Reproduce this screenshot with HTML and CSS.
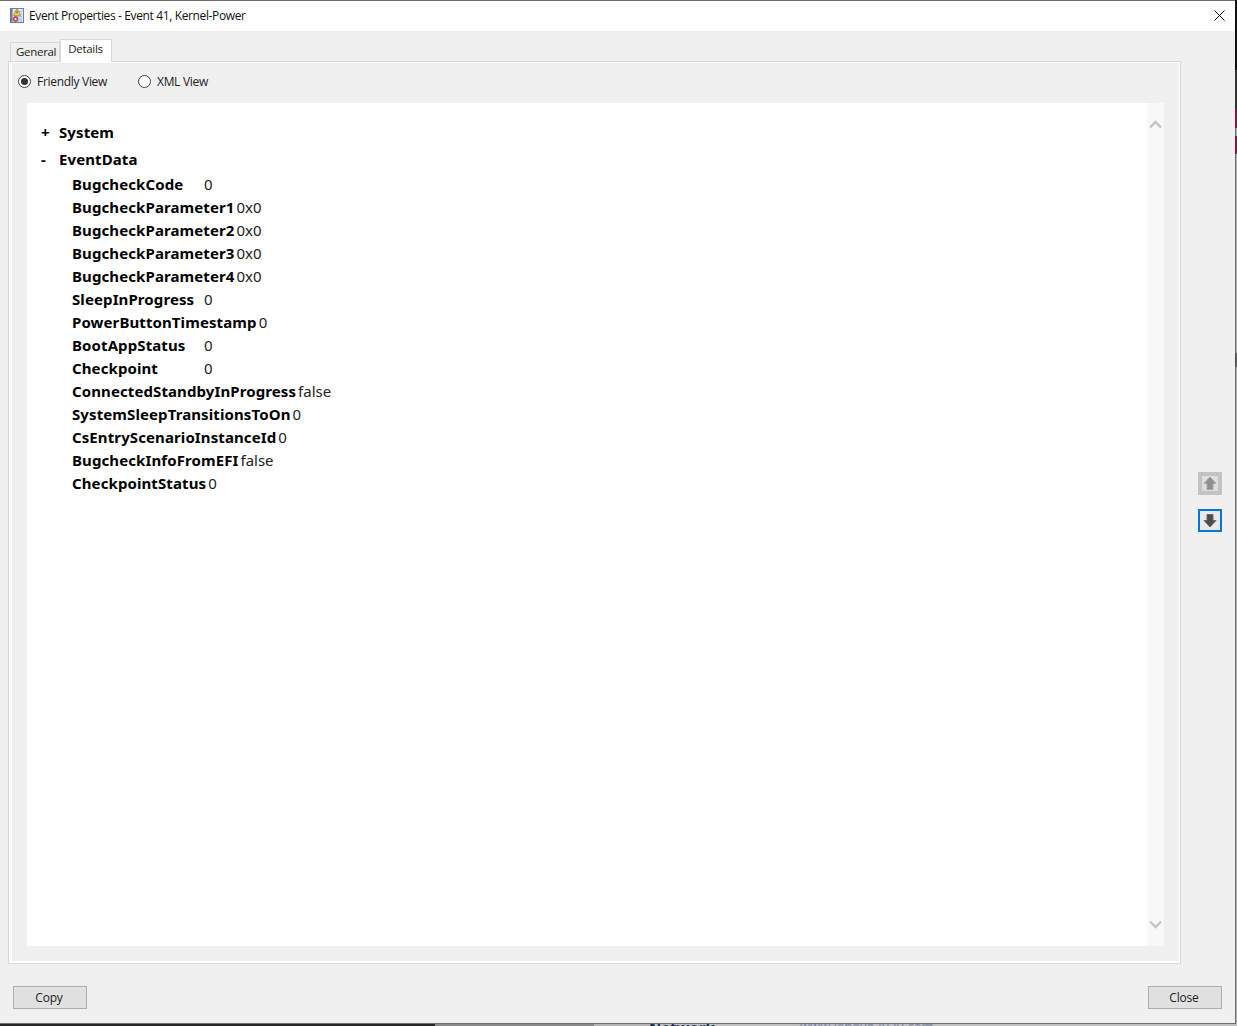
FILE: index.html
```html
<!DOCTYPE html>
<html lang="en">
<head>
<meta charset="utf-8">
<title>Event Properties</title>
<link rel="stylesheet" href="styles.css">
</head>
<body>
<div class="stage">
  <div class="window">
    <header class="titlebar">
      <svg class="appicon" width="15" height="15" viewBox="0 0 15 15">
        <rect x="1.500" y=".5" width="13" height="14" fill="#dde5f3" stroke="#6d7fa6"/>
        <rect x="1" y="0" width="2.500" height="15" fill="#6a7ba3"/>
        <path d="M5 3.500h8M5 6h8M5 8.500h8M5 11h8M5 13h8" stroke="#a9b8d4"/>
        <path d="M8 .5 L11.500 7.500 H4.500 Z" fill="#f0cf5a" stroke="#a5842a" stroke-width=".7"/>
        <path d="M8 3v2.500" stroke="#5a4710"/>
        <circle cx="6.500" cy="11" r="2.500" fill="#d8524f" stroke="#9a3a3a" stroke-width=".6"/>
        <circle cx="6.500" cy="11" r="1" fill="#fff"/>
      </svg>
      <span class="title">Event Properties - Event 41, Kernel-Power</span>
      <svg class="closex" width="11" height="11" viewBox="0 0 11 11"><path d="M.5.5l10 10M10.500.5l-10 10" stroke="#000" fill="none"/></svg>
    </header>
    <main class="content">
      <div class="left">
        <nav class="tabs">
          <span class="tab">General</span>
          <span class="tab active">Details</span>
        </nav>
        <section class="panel">
          <div class="views">
            <label class="view view-first"><span class="radio on"></span>Friendly View</label>
            <label class="view"><span class="radio"></span>XML View</label>
          </div>
          <div class="viewer">
            <div class="tree">
              <div class="node node-sys"><span class="sign">+</span><b>System</b></div>
              <div class="node node-data"><span class="sign">-</span><b>EventData</b></div>
              <div class="data">
                <div class="row"><b>BugcheckCode</b><span>0</span></div>
                <div class="row"><b>BugcheckParameter1</b><span>0x0</span></div>
                <div class="row"><b>BugcheckParameter2</b><span>0x0</span></div>
                <div class="row"><b>BugcheckParameter3</b><span>0x0</span></div>
                <div class="row"><b>BugcheckParameter4</b><span>0x0</span></div>
                <div class="row"><b>SleepInProgress</b><span>0</span></div>
                <div class="row"><b>PowerButtonTimestamp</b><span>0</span></div>
                <div class="row"><b>BootAppStatus</b><span>0</span></div>
                <div class="row"><b>Checkpoint</b><span>0</span></div>
                <div class="row"><b>ConnectedStandbyInProgress</b><span>false</span></div>
                <div class="row"><b>SystemSleepTransitionsToOn</b><span>0</span></div>
                <div class="row"><b>CsEntryScenarioInstanceId</b><span>0</span></div>
                <div class="row"><b>BugcheckInfoFromEFI</b><span>false</span></div>
                <div class="row"><b>CheckpointStatus</b><span>0</span></div>
              </div>
            </div>
            <div class="scrollbar">
              <svg width="13" height="9" viewBox="0 0 13 9"><path d="M1 7.500l5.500-5.500 5.500 5.500" stroke="#c4c4c4" stroke-width="2.400" fill="none"/></svg>
              <svg width="13" height="9" viewBox="0 0 13 9"><path d="M1 1.500l5.500 5.500 5.500-5.500" stroke="#c4c4c4" stroke-width="2.400" fill="none"/></svg>
            </div>
          </div>
        </section>
      </div>
      <aside class="arrows">
        <span class="arrowbtn disabled"><svg width="14" height="15" viewBox="0 0 14 15"><path d="M7 1l6 6.500H10V13.500H4V7.500H1z" fill="#8e8e8e" stroke="#a8a8a8"/></svg></span>
        <span class="arrowbtn focused"><svg width="14" height="15" viewBox="0 0 14 15"><path d="M7 14l6-6.500H10V1.500H4V7.500H1z" fill="#4c4c4c" stroke="#6a6a6a"/></svg></span>
      </aside>
    </main>
    <footer class="footer">
      <button class="btn">Copy</button>
      <button class="btn">Close</button>
    </footer>
  </div>
  <div class="edge-right"></div>
</div>
<div class="edge-bottom">
  <span class="seg seg-dark"></span>
  <span class="seg seg-mid"></span>
  <span class="seg seg-soft"></span>
  <span class="seg seg-head">Network</span>
  <span class="seg seg-link">www.lenovo2020.com</span>
</div>
</body>
</html>
```

FILE: styles.css
```css
html, body { margin: 0; padding: 0; height: 100%; background: #f0f0f0; overflow: hidden; }
body { font-family: "Open Sans", "Noto Sans", sans-serif; color: #000; }
.stage { display: flex; height: 1024px; }
.window { width: 1235px; height: 1024px; flex: none; display: flex; flex-direction: column; background: #f0f0f0; border-top: 1px solid #6e6e6e; border-bottom: 1px solid #6e6e6e; box-sizing: border-box; }
.titlebar { height: 30px; flex: none; background: #fff; display: flex; align-items: center; padding: 0 0 2px 9px; box-sizing: border-box; font-size: 12px; }
.appicon { margin-right: 5px; }
.title { color: #111; letter-spacing: -.37px; }
.closex { margin-left: auto; margin-right: 10px; }
.content { display: flex; padding-left: 8px; flex: none; height: 933px; }
.left { width: 1173px; display: flex; flex-direction: column; }
.tabs { height: 30px; flex: none; display: flex; align-items: flex-end; padding-left: 2px; font-size: 11.5px; letter-spacing: -.3px; }
.tab { height: 19px; line-height: 17px; padding: 0 3px 0 5px; border: 1px solid #d9d9d9; border-bottom: 0; box-sizing: border-box; background: #f0f0f0; color: #222; }
.tab.active { height: 23px; line-height: 18px; background: #fff; padding: 0 8px 0 7px; position: relative; top: 1px; z-index: 1; color: #222; }
.panel { height: 903px; box-sizing: border-box; border: 1px solid #d9d9d9; box-shadow: inset 3px 1px 0 #fff, inset -1px -2px 0 #fff; display: flex; flex-direction: column; padding: 0 16px 17px 18px; }
.views { height: 41px; flex: none; padding-bottom: 3px; box-sizing: border-box; display: flex; align-items: center; font-size: 12px; letter-spacing: -.3px; color: #222; margin-left: -9px; }
.view { display: flex; align-items: center; gap: 6px; }
.view-first { width: 120px; }
.radio { width: 13px; height: 13px; border: 1px solid #444; border-radius: 50%; background: #fff; box-sizing: border-box; display: block; position: relative; }
.radio.on::after { content: ""; position: absolute; left: 2px; top: 2px; width: 7px; height: 7px; border-radius: 50%; background: #333; }
.viewer { flex: 1; display: flex; background: #fff; min-height: 0; }
.tree { flex: 1; padding: 19px 0 0 14px; font-family: "Noto Sans", "Open Sans", sans-serif; font-size: 15px; }
.node { display: flex; height: 27px; line-height: 21px; }
.node-data { height: 24px; }
.node b, .row b { font-weight: 700; letter-spacing: .1px; white-space: nowrap; }
.sign { width: 18px; font-weight: 700; }
.data { margin-left: 31px; }
.row { display: flex; height: 23px; line-height: 23px; color: #222; }
.row b { min-width: 130px; margin-right: 2px; color: #000; }
.scrollbar { width: 17px; flex: none; background: #f8f8f8; display: flex; flex-direction: column; justify-content: space-between; align-items: center; padding: 17px 0; box-sizing: border-box; }
.arrows { width: 54px; flex: none; display: flex; flex-direction: column; align-items: center; gap: 14px; padding: 441px 0 0 4px; box-sizing: border-box; }
.arrowbtn { width: 24px; height: 23px; box-sizing: border-box; display: flex; align-items: center; justify-content: center; }
.arrowbtn.disabled { background: #dedede; border: 4px solid #c3c3c3; }
.arrowbtn.focused { background: #e9e9e9; border: 2px solid #0078d7; }
.footer { height: 58px; flex: none; display: flex; justify-content: space-between; padding: 22px 13px 0; box-sizing: border-box; }
.btn { width: 74px; height: 23px; padding: 0 2px 0 0; background: #e1e1e1; border: 1px solid #adadad; font: 12px "Open Sans", sans-serif; letter-spacing: -.2px; color: #222; }
.edge-right { width: 2px; height: 1024px; flex: none; background: linear-gradient(#111 0 70px, #333 70px 108px, #7a1a40 108px 128px, transparent 128px 136px, #7a1a40 136px 154px, transparent 154px 353px, #555 353px 367px, transparent 367px), linear-gradient(90deg, #6e6e6e 1px, #b4b4b4 1px); }
.edge-bottom { display: flex; height: 2px; overflow: hidden; background: #c0c0c0; font-size: 15px; line-height: 20px; }
.seg { flex: none; display: block; height: 2px; white-space: nowrap; }
.seg-dark { width: 435px; background: #262626; }
.seg-mid { width: 159px; background: #8a8a8a; }
.seg-soft { width: 55px; background: #b4b4b4; }
.seg-head { width: 151px; margin-top: -7px; font-weight: 700; color: #1d2b4d; height: 20px; }
.seg-link { margin-top: -8px; color: #7b86a8; font-size: 13px; height: 20px; }
```
